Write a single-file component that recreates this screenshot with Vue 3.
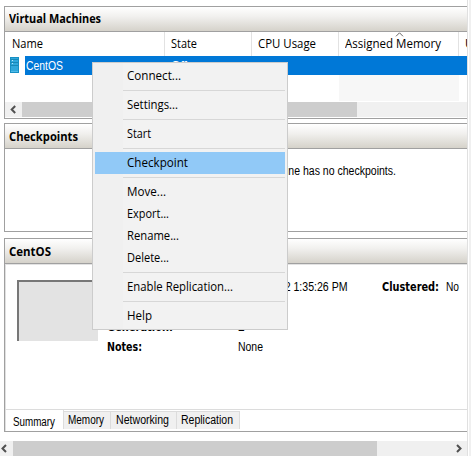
<script setup>
const menu = [
  [{ label: 'Connect...', w: 54 }],
  [{ label: 'Settings...', w: 51 }],
  [{ label: 'Start', w: 24 }],
  [{ label: 'Checkpoint', w: 61, active: true }],
  [{ label: 'Move...', w: 39 }, { label: 'Export...', w: 42 }, { label: 'Rename...', w: 52 }, { label: 'Delete...', w: 42 }],
  [{ label: 'Enable Replication...', w: 106 }],
  [{ label: 'Help', w: 25 }],
]
const tabs = [
  { label: 'Memory', w: 36, tab: 47 },
  { label: 'Networking', w: 53, tab: 66 },
  { label: 'Replication', w: 52, tab: 63 },
]
</script>

<template>
  <div class="window">
    <main class="content">
      <section class="panel machines">
        <header class="title"><svg width="96" height="18"><text x="0" y="13" textLength="92" lengthAdjust="spacingAndGlyphs">Virtual Machines</text></svg></header>
        <div class="columns">
          <div class="col name"><svg width="40" height="18"><text x="0" y="13" textLength="31" lengthAdjust="spacingAndGlyphs">Name</text></svg></div>
          <div class="col state"><svg width="40" height="18"><text x="0" y="13" textLength="26" lengthAdjust="spacingAndGlyphs">State</text></svg></div>
          <div class="col cpu"><svg width="70" height="18"><text x="0" y="13" textLength="58" lengthAdjust="spacingAndGlyphs">CPU Usage</text></svg></div>
          <div class="col memory">
            <svg width="110" height="18"><text x="0" y="13" textLength="96" lengthAdjust="spacingAndGlyphs">Assigned Memory</text></svg>
            <svg class="sort" width="9" height="5" viewBox="0 0 9 5"><path d="M1 4.3 4.5.8 8 4.3" fill="none" stroke="#666" /></svg>
          </div>
          <div class="col uptime"><svg width="9" height="18"><text x="0" y="13">U</text></svg></div>
        </div>
        <div class="row">
          <svg class="server" width="9" height="16" viewBox="0 0 9 16" shape-rendering="crispEdges">
            <rect width="9" height="16" fill="#168fc4" />
            <rect x="1" y="1" width="7" height="14" fill="#30a7db" />
            <path d="M1 2.5h7M1 5.5h7M1 8.5h7" stroke="#1688b8" />
            <path d="M2 3.5h1M2 6.5h1" stroke="#b9e6f8" />
            <path d="M1 14.5h7" stroke="#51bce8" />
          </svg>
          <div class="selected">
            <svg width="144" height="19"><text class="gui" x="1" y="14" textLength="37" lengthAdjust="spacingAndGlyphs">CentOS</text></svg>
            <svg width="40" height="19"><text class="gui" x="2" y="14" textLength="16" lengthAdjust="spacingAndGlyphs">Off</text></svg>
          </div>
        </div>
        <div class="empty"><div class="sorted"></div></div>
        <div class="scroll inner">
          <svg class="arrow" width="17" height="15"><path d="M10.2 4 6.7 7.5l3.5 3.5" /></svg>
          <div class="thumb"></div>
        </div>
      </section>

      <section class="panel checkpoints">
        <header class="title"><svg width="84" height="18"><text x="0" y="13" textLength="69" lengthAdjust="spacingAndGlyphs">Checkpoints</text></svg></header>
        <div class="message"><svg width="310" height="16"><text class="gui" x="307" y="12" text-anchor="end" textLength="230" lengthAdjust="spacingAndGlyphs">The selected virtual machine has no checkpoints.</text></svg></div>
      </section>

      <section class="panel details">
        <header class="title"><svg width="60" height="18"><text x="0" y="13" textLength="42" lengthAdjust="spacingAndGlyphs">CentOS</text></svg></header>
        <div class="summary">
          <div class="preview"></div>
          <dl class="facts">
            <dt><svg width="120" height="15"><text x="0" y="12" textLength="50" lengthAdjust="spacingAndGlyphs">Created:</text></svg></dt>
            <dd><svg width="144" height="15"><text class="gui" x="109.5" y="12" text-anchor="end" textLength="104" lengthAdjust="spacingAndGlyphs">8/19/2022 1:35:26 PM</text></svg></dd>
            <dt><svg width="64" height="15"><text x="0" y="12" textLength="57" lengthAdjust="spacingAndGlyphs">Clustered:</text></svg></dt>
            <dd><svg width="20" height="15"><text class="gui" x="0" y="12" textLength="13" lengthAdjust="spacingAndGlyphs">No</text></svg></dd>
            <dt class="third"><svg width="120" height="15"><text x="0" y="12" textLength="66" lengthAdjust="spacingAndGlyphs">Generation:</text></svg></dt>
            <dd class="third"><svg width="20" height="15"><text class="gui" x="0" y="12">2</text></svg></dd>
            <dt class="fourth"><svg width="120" height="15"><text x="0" y="12" textLength="35" lengthAdjust="spacingAndGlyphs">Notes:</text></svg></dt>
            <dd class="fourth"><svg width="40" height="15"><text class="gui" x="0" y="12" textLength="25" lengthAdjust="spacingAndGlyphs">None</text></svg></dd>
          </dl>
        </div>
        <nav class="tabs">
          <div class="tab current"><svg width="46" height="16"><text class="gui" x="0" y="12" textLength="42" lengthAdjust="spacingAndGlyphs">Summary</text></svg></div>
          <div v-for="t in tabs" :key="t.label" class="tab" :style="{ width: t.tab + 'px' }">
            <svg :width="t.w + 2" height="16"><text class="gui" x="0" y="12" :textLength="t.w" lengthAdjust="spacingAndGlyphs">{{ t.label }}</text></svg>
          </div>
        </nav>
      </section>

      <div class="scroll outer">
        <svg class="arrow" width="13" height="15"><path d="M6 4 2.5 7.5 6 11" /></svg>
        <div class="thumb"></div>
        <svg class="arrow" width="13" height="15"><path d="M3 4l3.5 3.5L3 11" /></svg>
      </div>
    </main>
    <div class="edge"></div>

    <div class="menu">
      <div v-for="(group, i) in menu" :key="i" class="group">
        <div v-for="m in group" :key="m.label" class="item" :class="{ active: m.active }">
          <svg :width="m.w + 3" height="18"><text x="0" y="13" :textLength="m.w" lengthAdjust="spacingAndGlyphs">{{ m.label }}</text></svg>
        </div>
      </div>
    </div>
  </div>
</template>

<style>
body { margin: 0; overflow: hidden; background: #fff; }
</style>

<style scoped>
* { box-sizing: border-box; }
svg { display: block; flex: none; }
text { font: 12px "Open Sans", "Noto Sans", sans-serif; fill: #000; }
text.gui { font: 12px "Liberation Sans", Arial, sans-serif; }
.window { position: relative; display: flex; width: 471px; height: 456px; overflow: hidden; background: #fff; }
.content { width: 467px; display: flex; flex-direction: column; padding-top: 6px; overflow: hidden; }
.edge { width: 4px; border-left: 1px solid #e0e0e0; background: linear-gradient(90deg, #fff 1px, #f0f0f0 1px); }
.panel { margin-left: 4px; border: 1px solid #a0a0a0; border-right: 0; display: flex; flex-direction: column; flex: none; overflow: hidden; }
.machines { height: 113px; margin-bottom: 4px; }
.checkpoints { height: 109px; margin-bottom: 6px; }
.details { height: 194px; margin-bottom: 9px; }
.title { height: 25px; flex: none; padding: 4px 0 0 4px; border-bottom: 1px solid #a0a0a0; background: linear-gradient(#fff, #f1f0ee 40%, #d5d2ca); }
.title text { font-weight: 700; }
.machines .title { padding-top: 3px; }
.columns { display: flex; height: 24px; flex: none; }
.col { position: relative; padding: 3px 0 0 7px; border-right: 1px solid #e2e2e2; flex: none; overflow: hidden; }
.name { width: 160px; }
.state { width: 87px; padding-left: 6px; }
.cpu { width: 87px; padding-left: 6px; }
.memory { width: 120px; padding-left: 6px; }
.uptime { padding-left: 6px; border: 0; }
.sort { position: absolute; left: 56px; top: 0; }
.row { display: flex; height: 19px; flex: none; padding-left: 5px; }
.server { margin: 1px 6px 0 0; }
.selected { display: flex; flex: 1; background: #0078d7; }
.selected text { fill: #fff; }
.empty { height: 27px; flex: none; padding-left: 334px; }
.sorted { width: 120px; height: 26px; background: #f7f7f7; }
.scroll { display: flex; height: 15px; flex: none; background: #f0f0f0; }
.thumb { background: #cdcdcd; }
.inner .thumb { width: 335px; }
.outer .thumb { width: 364px; margin-right: 77px; }
.arrow path { fill: none; stroke: #505050; stroke-width: 2; }
.message { padding: 14px 0 0 84px; }
.summary { display: flex; flex: 1; border-left: 1px solid #e0e0e0; border-top: 1px solid #e3e3e3; padding: 15px 0 0 11px; }
.preview { width: 81px; height: 61px; flex: none; background: #e3e3e3; border-top: 2px solid #777; border-left: 2px solid #777; }
.facts { display: grid; grid-template-columns: 131px 144px 64px 20px; grid-template-rows: 20px 20px 20px 15px; margin: -1px 0 0 9px; }
.facts dt, .facts dd { margin: 0; }
.facts dt text { font: bold 11.5px "DejaVu Sans Condensed", "DejaVu Sans", sans-serif; }
.facts .third { grid-row: 3; }
.facts .fourth { grid-row: 4; }
dt.third, dt.fourth { grid-column: 1; }
dd.third, dd.fourth { grid-column: 2; }
.tabs { display: flex; height: 22px; flex: none; padding-bottom: 2px; border-left: 1px solid #e0e0e0; border-top: 1px solid #dcdcdc; }
.tab { display: flex; justify-content: center; height: 18px; flex: none; margin-top: 1px; border-top: 1px solid #dcdcdc; border-right: 1px solid #dcdcdc; background: #f0f0f0; }
.tab.current { width: 58px; height: 19px; margin: 0; padding: 4px 0 0 7px; border-top: 0; background: #fff; justify-content: flex-start; }
.menu { position: absolute; left: 92px; top: 62px; width: 196px; height: 268px; padding: 2px; border: 1px solid #ccc; background: linear-gradient(90deg, #f0f0f0 30px, #f2f2f2 30px); }
.group + .group { padding-top: 7px; background: linear-gradient(#d7d7d7, #d7d7d7) 28px 3px / 162px 1px no-repeat; }
.item { height: 22px; padding: 2px 0 0 32px; }
.item.active { background: #91c9f7; }
</style>
